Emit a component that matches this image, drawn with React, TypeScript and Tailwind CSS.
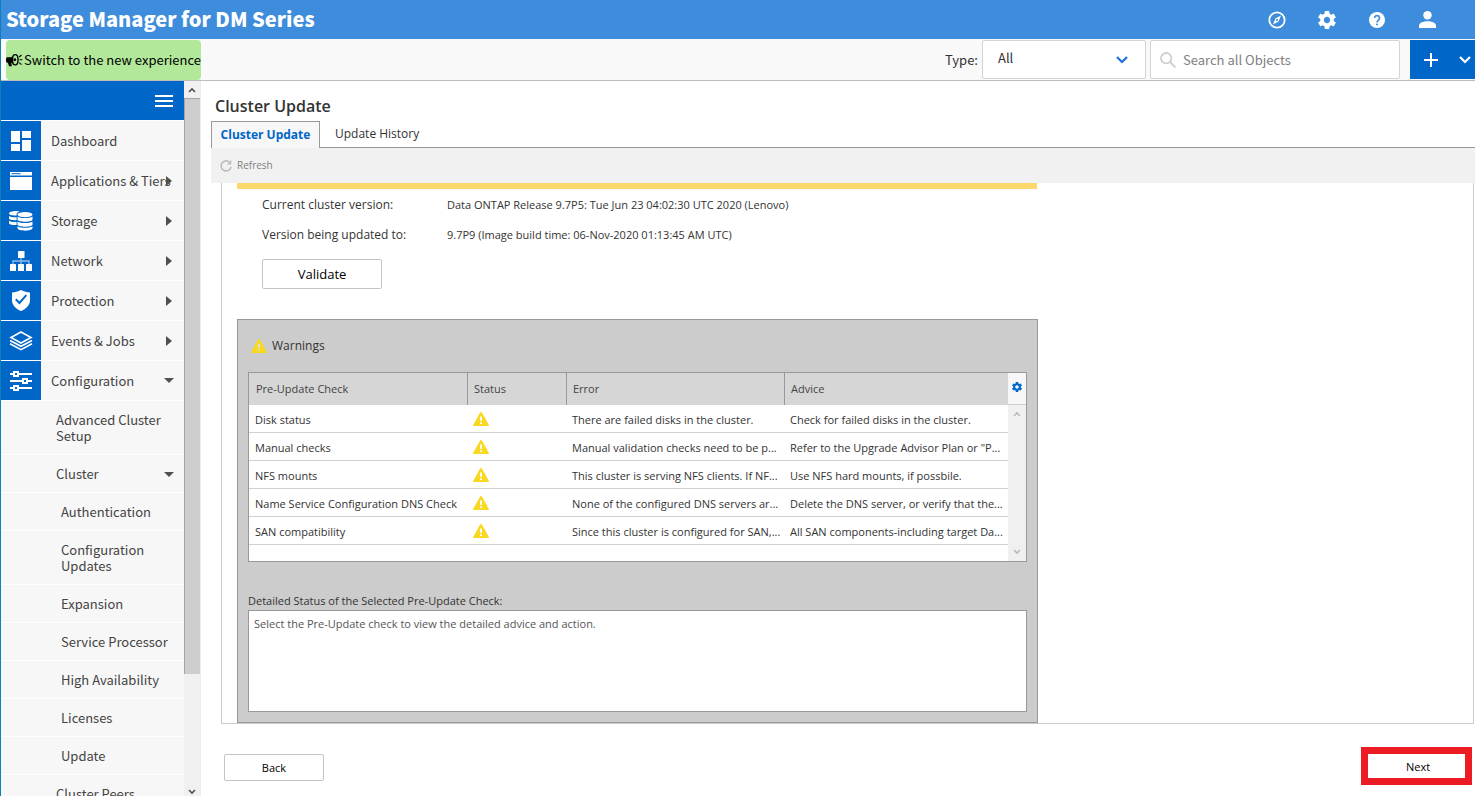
import React, { useState } from "react";
import clsx from "clsx";

type MenuItem = {
  label: string;
  icon: React.ReactNode;
  arrow?: "right" | "down";
};

type SubItem = {
  label: string;
  level: 1 | 2;
  arrow?: "down";
};

type Check = {
  name: string;
  error: string;
  advice: string;
};

const DashboardIcon = () => (
  <svg width="20" height="20" viewBox="0 0 20 20" fill="#fff">
    <rect x="0" y="0" width="9" height="11" />
    <rect x="0" y="13" width="9" height="7" />
    <rect x="11" y="0" width="9" height="7" />
    <rect x="11" y="9" width="9" height="11" />
  </svg>
);

const ApplicationsIcon = () => (
  <svg width="22" height="18" viewBox="0 0 22 18" fill="#fff">
    <path d="M0 0h22v3.5H0z" />
    <path d="M0 5h22v13H0z" />
    <path d="M1.5 1.2h9v1h-9z" fill="#0066c8" />
  </svg>
);

const StorageIcon = () => (
  <svg width="24" height="20" viewBox="0 0 24 20">
    <g fill="#fff">
      <path d="M0 2.6C0 1 3 0 7 0c1.6 0 2.6.2 3.6.5C8.600 1.200 7.600 2.200 7.600 3.400v1C3.500 4.800 0 4.200 0 2.600z" />
      <path d="M0 5c1.500 1.100 4.500 1.500 7.600 1.200v3C3.500 9.400 0 8.800 0 7.500z" />
      <path d="M0 9.800c1.500 1.100 4.500 1.500 7.600 1.200v3C3.500 14.200 0 13.600 0 12.300z" />
      <ellipse cx="16" cy="3.600" rx="7.500" ry="2.700" />
      <path d="M8.500 5.400c3 2 12 2 15 0v3c0 3-15 3-15 0z" />
      <path d="M8.500 10.400c3 2 12 2 15 0v3c0 3-15 3-15 0z" />
      <path d="M8.500 15.200c3 2 12 2 15 0v1.800c0 3.500-15 3.500-15 0z" />
    </g>
  </svg>
);

const NetworkIcon = () => (
  <svg width="22" height="20" viewBox="0 0 22 20">
    <path d="M3 13v-3h16v3M11 6v7" fill="none" stroke="#8fbcea" strokeWidth="1.300" />
    <g fill="#fff">
      <rect x="8" y="0" width="6.500" height="7" rx="0.500" />
      <rect x="0" y="13" width="6" height="7" rx="0.500" />
      <rect x="8" y="13" width="6" height="7" rx="0.500" />
      <rect x="16" y="13" width="6" height="7" rx="0.500" />
    </g>
  </svg>
);

const ProtectionIcon = () => (
  <svg width="18" height="21" viewBox="0 0 18 21">
    <path d="M9 0c3 1.500 6 2.200 9 2.400V10c0 5.500-4 9-9 11-5-2-9-5.500-9-11V2.400C3 2.200 6 1.500 9 0z" fill="#fff" />
    <path d="M3.800 9.300 7.500 13l6.800-7.800" fill="none" stroke="#0066c8" strokeWidth="2" />
  </svg>
);

const EventsIcon = () => (
  <svg width="24" height="20" viewBox="0 0 24 20" fill="none" stroke="#fff" strokeWidth="1.600">
    <path d="M12 1 22 6.500 12 12 2 6.500z" />
    <path d="M1 9.500 12 15.300 23 9.500" />
    <path d="M1 12.800 12 18.600l11-5.800" />
  </svg>
);

const ConfigurationIcon = () => (
  <svg width="22" height="20" viewBox="0 0 22 20" fill="none" stroke="#fff" strokeWidth="2">
    <path d="M0 3h4M9 3h13M0 10h12M18 10h4M0 17h4M9 17h13" />
    <path d="M4 1h4v4H4zM13 8h4v4h-4zM4 15h4v4H4z" />
  </svg>
);

const GearIcon = ({ size }: { size: number }) => (
  <svg width={size} height={size} viewBox="2 2 20 20" fill="currentColor">
    <path d="M19.430 12.980c.04-.32.07-.64.07-.98s-.03-.66-.07-.98l2.110-1.650c.19-.15.24-.42.12-.64l-2-3.460c-.12-.22-.39-.3-.61-.22l-2.490 1c-.52-.4-1.080-.73-1.690-.98l-.38-2.650A.488.488 0 0 0 14 2h-4c-.25 0-.46.18-.49.42l-.38 2.650c-.61.25-1.170.59-1.690.98l-2.490-1c-.23-.09-.49 0-.61.22l-2 3.460c-.13.22-.07.49.12.64l2.110 1.650c-.04.32-.07.65-.07.98s.03.66.07.98l-2.110 1.650c-.19.15-.24.42-.12.64l2 3.460c.12.22.39.3.61.22l2.490-1c.52.4 1.080.73 1.690.98l.38 2.650c.03.24.24.42.49.42h4c.25 0 .46-.18.49-.42l.38-2.650c.61-.25 1.170-.59 1.690-.98l2.490 1c.23.09.49 0 .61-.22l2-3.460c.12-.22.07-.49-.12-.64l-2.110-1.650zM12 15.500c-1.930 0-3.500-1.570-3.500-3.500s1.570-3.500 3.500-3.500 3.500 1.570 3.500 3.500-1.570 3.500-3.500 3.500z" />
  </svg>
);

const CompassIcon = () => (
  <svg width="18" height="18" viewBox="0 0 18 18">
    <circle cx="9" cy="9" r="7.700" fill="none" stroke="#fff" strokeWidth="1.800" />
    <path d="M13 4.500 10.600 10.500 5 13.500 7.400 7.500z" fill="#fff" />
    <circle cx="9" cy="9" r="1.100" fill="#3e8cdc" />
  </svg>
);

const HelpIcon = () => (
  <svg width="16" height="16" viewBox="0 0 16 16">
    <circle cx="8" cy="8" r="8" fill="#fff" />
    <path d="M5.500 6.100a2.500 2.500 0 1 1 4 2C8.500 8.800 8 9.200 8 10.500" fill="none" stroke="#3e8cdc" strokeWidth="1.700" />
    <circle cx="8" cy="12.600" r="1" fill="#3e8cdc" />
  </svg>
);

const UserIcon = () => (
  <svg width="17" height="17" viewBox="0 0 17 17" fill="#fff">
    <circle cx="8.500" cy="4.200" r="4.200" />
    <path d="M0 17v-2.300C0 11.800 4.500 10.300 8.500 10.300s8.500 1.500 8.500 4.400V17z" />
  </svg>
);

const MegaphoneIcon = () => (
  <svg width="17" height="15" viewBox="0 0 18 16" className="shrink-0">
    <path d="M0 6c0-1 .8-1.500 1.800-1.500H5C7 4.300 8 3 9.500 1.800v11C8 11.800 7 10.800 5.500 10.500l.8 3.500H3.200l-1.200-3.500C.8 10.300 0 9.500 0 8.500z" />
    <ellipse cx="9.800" cy="7.200" rx="3" ry="5.500" fill="#b2e89a" stroke="#000" strokeWidth="1.500" />
    <circle cx="9.300" cy="7.200" r="1.500" />
    <path d="M14 4.200 16.500 2.200M14.500 7.200h2.800M14 10.200l2.500 2.200" stroke="#000" strokeWidth="1.200" />
  </svg>
);

const WarningIcon = ({ mark }: { mark: string }) => (
  <svg width="16" height="14" viewBox="0 0 16 14" className="shrink-0">
    <path d="M8 0c.4 0 .7.200.9.600l7 12.400c.2.500 0 1-.6 1H.7c-.6 0-.8-.5-.6-1L7.100.6C7.300.2 7.600 0 8 0z" fill="#f8d821" />
    <path d="M7.200 4.500h1.800v4.500H7.200zM7.200 10.300h1.800V12H7.200z" fill={mark} />
  </svg>
);

const Chevron = ({ className }: { className?: string }) => (
  <svg width="12" height="8" viewBox="0 0 12 8" fill="none" stroke="currentColor" strokeWidth="2.200" className={className}>
    <path d="M1 1l5 5 5-5" />
  </svg>
);

const ScrollArrow = ({ up }: { up?: boolean }) => (
  <svg width="8" height="6" viewBox="0 0 8 6" fill="none" stroke="currentColor" strokeWidth="1.600">
    <path d={up ? "M1 5l3-3 3 3" : "M1 1l3 3 3-3"} />
  </svg>
);

const MenuArrow = ({ direction }: { direction: "right" | "down" }) =>
  direction === "right" ? (
    <svg width="6" height="10" viewBox="0 0 6 10" fill="#505050" className="shrink-0">
      <path d="M0 0l6 5-6 5z" />
    </svg>
  ) : (
    <svg width="10" height="5" viewBox="0 0 10 5" fill="#505050" className="shrink-0">
      <path d="M0 0h10L5 5z" />
    </svg>
  );

const menu: MenuItem[] = [
  { label: "Dashboard", icon: <DashboardIcon /> },
  { label: "Applications & Tiers", icon: <ApplicationsIcon />, arrow: "right" },
  { label: "Storage", icon: <StorageIcon />, arrow: "right" },
  { label: "Network", icon: <NetworkIcon />, arrow: "right" },
  { label: "Protection", icon: <ProtectionIcon />, arrow: "right" },
  { label: "Events & Jobs", icon: <EventsIcon />, arrow: "right" },
  { label: "Configuration", icon: <ConfigurationIcon />, arrow: "down" },
];

const subMenu: SubItem[] = [
  { label: "Advanced Cluster Setup", level: 1 },
  { label: "Cluster", level: 1, arrow: "down" },
  { label: "Authentication", level: 2 },
  { label: "Configuration Updates", level: 2 },
  { label: "Expansion", level: 2 },
  { label: "Service Processor", level: 2 },
  { label: "High Availability", level: 2 },
  { label: "Licenses", level: 2 },
  { label: "Update", level: 2 },
  { label: "Cluster Peers", level: 1 },
];

const checks: Check[] = [
  {
    name: "Disk status",
    error: "There are failed disks in the cluster.",
    advice: "Check for failed disks in the cluster.",
  },
  {
    name: "Manual checks",
    error: "Manual validation checks need to be p...",
    advice: 'Refer to the Upgrade Advisor Plan or "P...',
  },
  {
    name: "NFS mounts",
    error: "This cluster is serving NFS clients. If NF...",
    advice: "Use NFS hard mounts, if possbile.",
  },
  {
    name: "Name Service Configuration DNS Check",
    error: "None of the configured DNS servers ar...",
    advice: "Delete the DNS server, or verify that the...",
  },
  {
    name: "SAN compatibility",
    error: "Since this cluster is configured for SAN,...",
    advice: "All SAN components-including target Da...",
  },
];

function Header() {
  return (
    <header className="flex h-[39px] shrink-0 items-center justify-between bg-[#3e8cdc] pl-[5px] pr-[39px] text-white">
      <h1 className="pb-px text-[20px] leading-6 font-black">Storage Manager for DM Series</h1>
      <div className="flex items-center gap-8">
        <button type="button" aria-label="Guide" className="flex w-[18px] justify-center"><CompassIcon /></button>
        <button type="button" aria-label="Settings" className="flex w-[18px] justify-center"><GearIcon size={18} /></button>
        <button type="button" aria-label="Help" className="flex w-[18px] justify-center"><HelpIcon /></button>
        <button type="button" aria-label="Account" className="flex w-[18px] justify-center"><UserIcon /></button>
      </div>
    </header>
  );
}

function Toolbar() {
  const [search, setSearch] = useState<string>("");

  return (
    <div className="flex h-[42px] shrink-0 justify-between border-b border-[#bdbdbd] bg-[#f9f9f9] pl-[5px] pt-px">
      <button
        type="button"
        className="flex h-10 w-[195px] items-center gap-px whitespace-nowrap rounded-sm bg-[#b2e89a] text-[13px] text-black"
      >
        <MegaphoneIcon />
        Switch to the new experience
      </button>
      <div className="flex h-[39px] items-center text-[13px] text-[#333]">
        <label htmlFor="type" className="mr-1">Type:</label>
        <div className="relative mr-1 h-full">
          <select
            id="type"
            className="h-full w-[164px] appearance-none rounded-xs border border-[#d4d4d4] bg-white pl-[15px] pb-[3px]"
          >
            <option>All</option>
          </select>
          <Chevron className="pointer-events-none absolute right-[18px] top-4 text-[#1f6fe0]" />
        </div>
        <div className="relative mr-[10px] h-full">
          <svg
            width="16"
            height="16"
            viewBox="0 0 16 16"
            fill="none"
            stroke="#cfcfcf"
            strokeWidth="1.800"
            className="absolute left-[10px] top-3"
          >
            <circle cx="6.200" cy="6.200" r="5.200" />
            <path d="M10 10l5.500 5.500" />
          </svg>
          <input
            type="text"
            aria-label="Search all Objects"
            placeholder="Search all Objects"
            value={search}
            onChange={(e) => setSearch(e.target.value)}
            className="h-full w-[250px] rounded-xs border border-[#d4d4d4] bg-white pl-8 placeholder:text-[#808080]"
          />
        </div>
        <button
          type="button"
          aria-label="Create"
          className="flex h-full w-[65px] items-center justify-between bg-[#0066c8] pl-[14px] pr-1 text-white"
        >
          <svg width="14" height="14" viewBox="0 0 14 14" stroke="#fff" strokeWidth="2">
            <path d="M7 0v14M0 7h14" />
          </svg>
          <Chevron />
        </button>
      </div>
    </div>
  );
}

function Sidebar() {
  return (
    <aside className="flex w-[199px] shrink-0">
      <nav className="flex-1 overflow-hidden bg-[#f7f7f7] text-[13px] leading-4 text-[#444]">
        <div className="flex h-[39px] items-center justify-end bg-[#0066c8] pr-[11px]">
          <button type="button" aria-label="Toggle menu">
            <svg width="18" height="12" viewBox="0 0 18 12" stroke="#fff" strokeWidth="2">
              <path d="M0 1h18M0 6h18M0 11h18" />
            </svg>
          </button>
        </div>
        <ul>
          {menu.map((item) => (
            <li key={item.label} className="h-10 border-t border-white">
              <a
                href="#"
                className={clsx("flex h-full items-center", item.arrow === "down" ? "pr-[10px]" : "pr-3")}
              >
                <span className="flex h-full w-10 shrink-0 items-center justify-center bg-[#0066c8]">
                  {item.icon}
                </span>
                <span className="min-w-0 flex-1 whitespace-nowrap pl-[10px]">{item.label}</span>
                {item.arrow && <MenuArrow direction={item.arrow} />}
              </a>
            </li>
          ))}
          {subMenu.map((item) => (
            <li key={item.label} className="border-t border-white">
              <a
                href="#"
                className={clsx(
                  "flex items-center justify-between pt-[11px] pb-[10px] pr-[10px]",
                  item.level === 1 ? "pl-[55px]" : "pl-[60px]"
                )}
              >
                {item.label}
                {item.arrow && <MenuArrow direction="down" />}
              </a>
            </li>
          ))}
        </ul>
      </nav>
      <div className="flex w-4 flex-col items-center bg-[#f0f0f0] text-[#505050]">
        <div className="flex h-[17px] shrink-0 items-center">
          <ScrollArrow up />
        </div>
        <div className="h-[576px] w-full border-l border-t border-[#a6a6a6] bg-[#cdcdcd]" />
        <div className="flex flex-1 items-end pb-px">
          <ScrollArrow />
        </div>
      </div>
    </aside>
  );
}

function ChecksTable() {
  return (
    <div className="flex h-[190px] border border-[#999] bg-white">
      <div className="flex-1">
        <table className="w-full table-fixed border-separate border-spacing-0 text-left text-[11px] leading-4 text-[#333]">
          <colgroup>
            <col className="w-[219px]" />
            <col className="w-[99px]" />
            <col className="w-[218px]" />
            <col />
          </colgroup>
          <thead className="bg-[#d6d6d6] text-[#444]">
            <tr className="h-8">
              <th className="border-r border-[#999] px-[7px] font-normal">Pre-Update Check</th>
              <th className="border-r border-[#999] px-[6px] font-normal">Status</th>
              <th className="border-r border-[#999] px-[6px] font-normal">Error</th>
              <th className="px-[6px] font-normal">Advice</th>
            </tr>
          </thead>
          <tbody>
            {checks.map((check) => (
              <tr key={check.name} className="h-7 whitespace-nowrap">
                <td className="border-b border-[#d0d0d0] pt-[3px] pl-[6px]">{check.name}</td>
                <td className="border-b border-[#d0d0d0] pl-[5px]">
                  <WarningIcon mark="#fff" />
                </td>
                <td className="border-b border-[#d0d0d0] pt-[3px] pl-[5px]">{check.error}</td>
                <td className="border-b border-[#d0d0d0] pt-[3px] pl-[5px]">{check.advice}</td>
              </tr>
            ))}
          </tbody>
        </table>
      </div>
      <div className="flex w-[18px] flex-col items-center bg-[#f0f0f0] text-[#b8b8b8]">
        <button
          type="button"
          aria-label="Table settings"
          className="flex h-8 w-full items-center justify-center border-b border-[#d0d0d0] bg-[#f7f7f7] pb-1 text-[#0066c8]"
        >
          <GearIcon size={10} />
        </button>
        <div className="flex flex-1 flex-col justify-between py-[6px]">
          <ScrollArrow up />
          <ScrollArrow />
        </div>
      </div>
    </div>
  );
}

function ClusterUpdate() {
  return (
    <main className="flex min-w-0 flex-1 flex-col border-l border-[#ececec] bg-white pl-[10px] font-['Open_Sans',sans-serif] text-[#333]">
      <h2 className="pl-1 pt-[13px] text-base leading-6 font-semibold">Cluster Update</h2>
      <div className="mt-[3px] flex h-[27px] shrink-0 text-[12px]">
        <button
          type="button"
          className="w-[109px] border border-b-0 border-[#999] bg-[#f7f7f7] font-bold text-[#0066c8]"
        >
          Cluster Update
        </button>
        <div className="flex-1 border-b border-[#999]">
          <button type="button" className="h-full px-[15px]">Update History</button>
        </div>
      </div>
      <div className="flex h-[35px] shrink-0 items-center bg-[#f1f1f1] pl-[9px] text-[10px] text-[#808080]">
        <button type="button" className="flex items-center gap-[5px]">
          <svg width="12" height="12" viewBox="0 0 12 12" fill="none" stroke="#bdbdbd" strokeWidth="1.600">
            <path d="M9.800 2.500A5 5 0 1 0 11 7" />
            <path d="M11.300 0v4.500H6.800z" fill="#bdbdbd" stroke="none" />
          </svg>
          Refresh
        </button>
      </div>

      <div className="ml-[10px] mr-px min-h-0 flex-1 overflow-hidden border border-t-0 border-[#ccc] pl-[15px]">
        <div className="w-[801px]">
          <div className="mr-px h-[6px] bg-[#fbd86c]" />
          <div className="pl-[25px] pt-[6px] pb-[30px]">
            <dl className="grid grid-cols-[185px_1fr] gap-y-[10px] leading-5">
              <dt className="text-[12px]">Current cluster version:</dt>
              <dd className="text-[11px] leading-5">Data ONTAP Release 9.7P5: Tue Jun 23 04:02:30 UTC 2020 (Lenovo)</dd>
              <dt className="text-[12px]">Version being updated to:</dt>
              <dd className="text-[11px] leading-5">9.7P9 (Image build time: 06-Nov-2020 01:13:45 AM UTC)</dd>
            </dl>
            <button
              type="button"
              className="mt-[14px] h-[30px] w-[120px] rounded-xs border border-[#c4c4c4] pt-px text-[13px] text-black"
            >
              Validate
            </button>
          </div>
          <section className="border border-[#999] bg-[#ccc] px-[10px] pt-4 pb-[10px]">
            <h3 className="mb-4 flex items-center gap-[5px] pl-[3px] text-[12px] leading-5">
              <WarningIcon mark="#ddd" />
              Warnings
            </h3>
            <ChecksTable />
            <label htmlFor="detail" className="mt-[30px] block text-[11px] leading-[18px]">
              Detailed Status of the Selected Pre-Update Check:
            </label>
            <textarea
              id="detail"
              readOnly
              value="Select the Pre-Update check to view the detailed advice and action."
              className="block h-[102px] w-full resize-none border border-[#999] bg-white px-[5px] py-1 text-[11px] leading-[17px] text-[#555]"
            />
          </section>
        </div>
      </div>

      <footer className="flex h-[72px] shrink-0 items-start justify-between pl-[13px] pr-[3px] pt-[23px] text-[11px] text-black">
        <button type="button" className="mt-[7px] h-[27px] w-[100px] rounded-xs border border-[#c4c4c4] pt-px">
          Back
        </button>
        <button type="button" className="h-[38px] w-[111px] border-[7px] border-[#ed1c24] bg-white pt-[3px] pl-[3px]">
          Next
        </button>
      </footer>
    </main>
  );
}

function App() {
  return (
    <div className="flex h-screen flex-col overflow-hidden border-l border-[#0a82b4] bg-white font-['Noto_Sans_CJK_SC',sans-serif]">
      <Header />
      <Toolbar />
      <div className="flex min-h-0 flex-1">
        <Sidebar />
        <ClusterUpdate />
      </div>
    </div>
  );
}

export default App;
